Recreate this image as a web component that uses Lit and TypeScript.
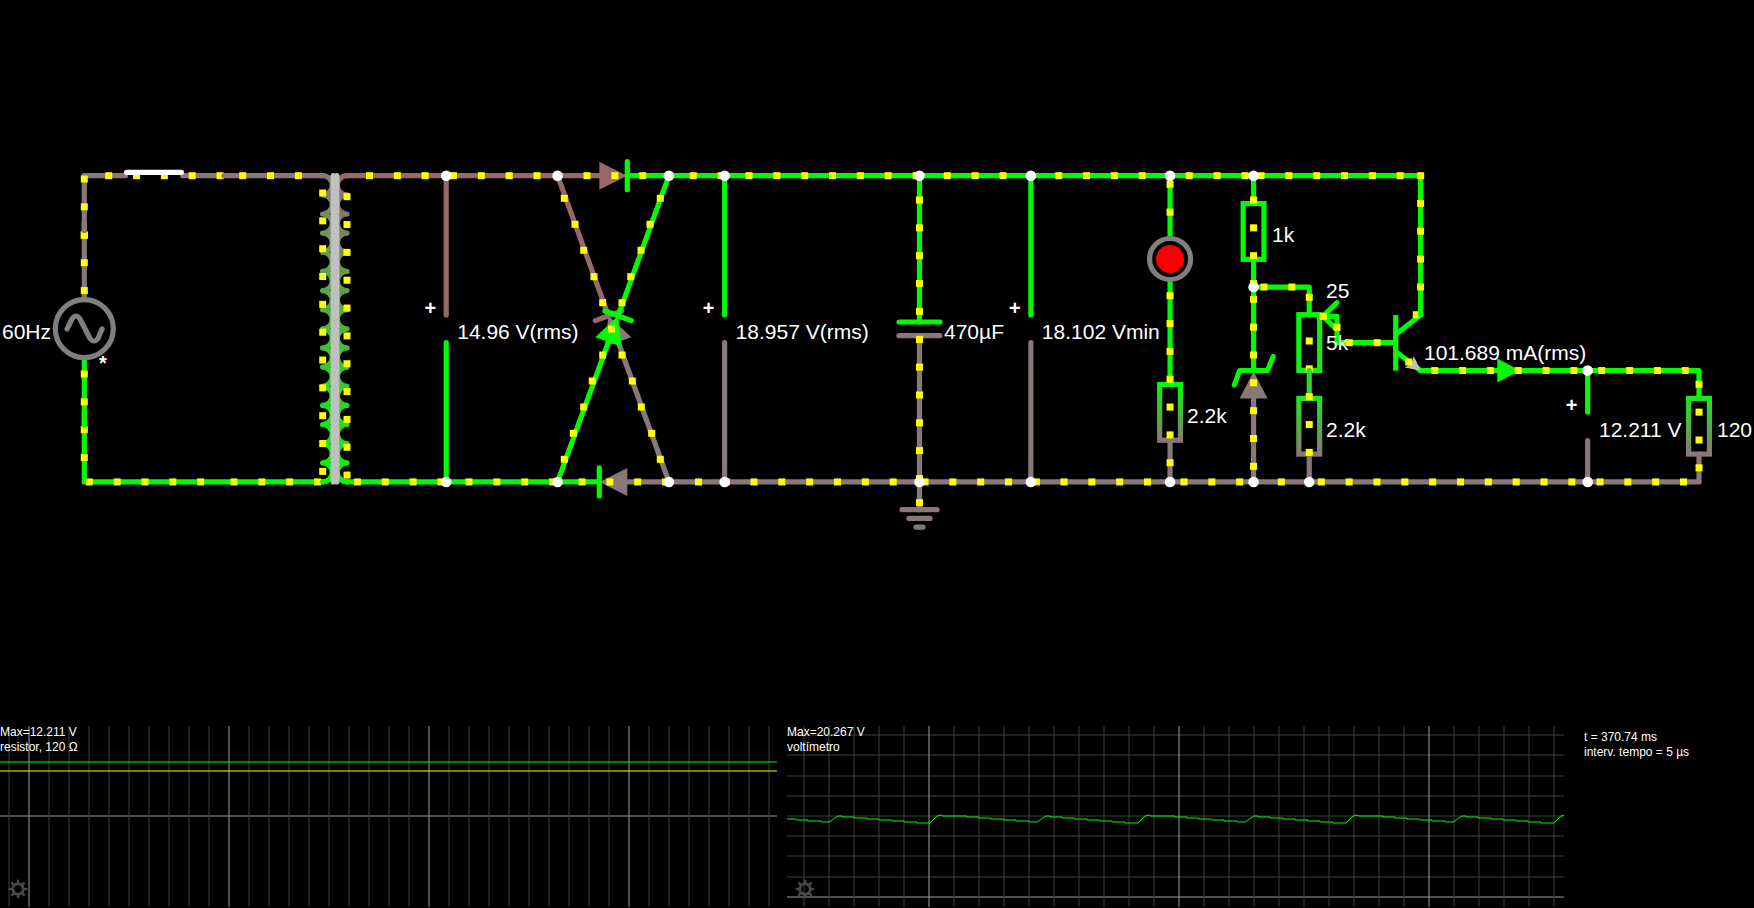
import { LitElement, html, svg, css } from "lit";
import { customElement, property } from "lit/decorators.js";

const GREEN = "#04fa04";
const GREY = "#887878";
const RUST = "#966868";
const DOT_STEP = 27.84;

// Grid coordinates of the schematic mapped to canvas units.
const X = (n: number) => 84.3 + n * DOT_STEP;
const Y = (n: number) => 175.7 + n * DOT_STEP;
const TOP = Y(0);
const BOTTOM = Y(11);

type Point = [number, number];

const wire = (color: string, ...pts: Point[]) =>
  svg`<polyline class="wire" stroke=${color} points=${pts.map((p) => p.join(",")).join(" ")} />`;

const shape = (color: string, ...pts: Point[]) =>
  svg`<polygon fill=${color} points=${pts.map((p) => p.join(",")).join(" ")} />`;

const dot = (x: number, y: number) =>
  svg`<rect class="charge" x=${x - 3.5} y=${y - 3.5} width="7" height="7" />`;

const hDots = (y: number, runs: Point[]) =>
  runs.map(([start, count]) =>
    Array.from({ length: count }, (_, i) => dot(start + i * DOT_STEP, y)));

const vDots = (x: number, runs: Point[]) =>
  runs.map(([start, count]) =>
    Array.from({ length: count }, (_, i) => dot(x, start + i * DOT_STEP)));

const node = (x: number, y: number) => svg`<circle class="node" cx=${x} cy=${y} r="5.3" />`;

const label = (x: number, y: number, text: string) =>
  svg`<text class="label" x=${x} y=${y}>${text}</text>`;

const mark = (x: number, y: number, text: string) =>
  svg`<text class="label mark" x=${x} y=${y}>${text}</text>`;

const resistor = (x: number, top: number, paint: string) =>
  svg`<rect class="body" x=${x - 10.4} y=${top} width="20.8" height="55.7" stroke=${paint} />`;

const voltmeter = (x: number, high: string, low: string, text: string) => svg`
  ${wire(high, [x, TOP], [x, 315])}
  ${wire(low, [x, 342.7], [x, BOTTOM])}
  ${mark(x - 16, 315, "+")}
  ${label(x + 11, 339, text)}`;

const coil = (x: number, sweep: number, paint: string) => {
  const step = (BOTTOM - TOP) / 16;
  const arcs = Array.from({ length: 16 }, (_, i) =>
    `A${step / 2} ${step / 2} 0 0 ${sweep} ${x} ${TOP + (i + 1) * step}`).join("");
  return svg`<path class="wire" stroke=${paint} d=${`M${x} ${TOP}${arcs}`} />`;
};

@customElement("circuit-board")
export class CircuitBoard extends LitElement {
  static styles = css`
    :host { display: block; }
    .board { display: block; width: 100%; height: auto; font-family: "Liberation Sans", Arial, sans-serif; }
    .wire { fill: none; stroke-width: 5.2; stroke-linecap: round; stroke-linejoin: round; }
    .body { fill: none; stroke-width: 5.2; }
    .butt { stroke-linecap: butt; }
    .charge { fill: #ffff00; }
    .node { fill: #ffffff; }
    .ring { fill: #000000; stroke: #808080; stroke-width: 5.2; }
    .lamp { fill: #fa0000; }
    .label { fill: #ffffff; font-size: 21px; }
    .mark { font-weight: 700; font-size: 20px; text-anchor: middle; }
  `;

  private primary() {
    return svg`
      ${wire(GREY, [X(0), TOP], [125.5, TOP])}
      ${wire(GREY, [182.7, TOP], [224, TOP])}
      ${wire(GREY, [X(0), TOP], [X(0), 234])}
      ${hDots(TOP, [[108.7, 5]])}
      ${vDots(X(0), [[179, 3]])}
      ${wire("#ffffff", [126.6, 172.3], [181.4, 172.3])}
      ${wire(GREY, [224, TOP], [322.6, TOP])}
      ${hDots(TOP, [[242.7, 3]])}
      ${wire(GREY, [X(0), 231], [X(0), 300])}
      ${vDots(X(0), [[262.7, 2]])}
      ${dot(X(0), 235.5)}
      ${wire(GREY, [X(0), 222], [X(0), 230.5])}
      ${wire(GREEN, [X(0), 358], [X(0), BOTTOM], [322.6, BOTTOM])}
      ${vDots(X(0), [[374, 4]])}
      ${wire(GREEN, [X(0), 412], [X(0), 425])}
      ${hDots(BOTTOM, [[89.3, 5], [234, 4]])}
      <circle class="ring" cx=${X(0)} cy="328.7" r="29" />
      <path class="wire" stroke="#808080"
        d="M67 329L72 319Q74 316 76 316Q78 316 80 319L90 338.5Q92 341 94 341Q96 341 98 338.5L102 329" />
      ${label(2, 339, "60Hz")}
      ${mark(103, 370, "*")}`;
  }

  private transformer() {
    return svg`
      ${coil(322.6, 1, "url(#primary)")}
      ${coil(347, 0, "url(#secondary)")}
      ${wire("#c0c0c0", [333.2, TOP], [333.2, BOTTOM])}
      ${wire("#c0c0c0", [336.8, TOP], [336.8, BOTTOM])}
      ${vDots(322.7, [[193, 11]])}
      ${vDots(347, [[196.7, 11]])}`;
  }

  private rails() {
    return svg`
      ${wire(RUST, [347, TOP], [602, TOP])}
      ${wire(GREEN, [627.3, TOP], [X(48), TOP], [X(48), 315])}
      ${wire(GREEN, [347, BOTTOM], [599.3, BOTTOM])}
      ${wire(GREY, [627.3, BOTTOM], [X(58), BOTTOM], [X(58), 454])}
      ${shape(RUST, [599.3, TOP - 14], [599.3, TOP + 14], [627, TOP])}
      ${wire(GREEN, [627.3, TOP - 14], [627.3, TOP + 14])}
      ${shape(GREY, [627.3, BOTTOM - 14], [627.3, BOTTOM + 14], [599.6, BOTTOM])}
      ${wire(GREEN, [599.3, BOTTOM - 14], [599.3, BOTTOM + 14])}
      ${hDots(TOP, [[369.5, 3], [453.5, 4], [587, 3], [693.3, 2], [749, 7], [947.3, 3],
        [1058.7, 4], [1189.3, 3], [1261, 6], [1420.7, 1]])}
      ${hDots(BOTTOM, [[357.4, 4], [469, 4], [582, 4], [698.5, 2], [754, 6], [925, 5],
        [1064, 4], [1184, 3], [1281.3, 1], [1321.3, 10], [1600, 4]])}
      ${vDots(X(48), [[203.4, 4]])}`;
  }

  private bridge() {
    const left: Point[] = [[564.3, 198.3], [575, 224.3], [583.7, 250.3], [594, 276.7], [602.7, 302.7],
      [622, 355], [632.3, 381], [641.3, 407], [651.7, 433.3], [660.3, 459.3]];
    const right: Point[] = [[660.3, 198.3], [650, 224.3], [641, 250.3], [630.7, 276.7], [622, 302.7],
      [602.7, 355], [592.3, 381], [583.7, 407], [573.3, 433.3], [564.3, 459.3]];
    return svg`
      ${wire(RUST, [X(17), TOP], [608.5, 315.8])}
      ${wire(GREY, [X(21), BOTTOM], [618.1, 342])}
      ${shape(GREY, [604.9, 346.8], [631.3, 337.2], [608.5, 315.8])}
      ${wire(RUST, [595.3, 320.6], [621.7, 311])}
      ${left.map(([x, y]) => dot(x, y))}
      ${wire(GREEN, [X(21), TOP], [618.1, 315.8])}
      ${wire(GREEN, [X(17), BOTTOM], [608.5, 342])}
      ${shape(GREEN, [595.3, 337.2], [621.7, 346.8], [618.1, 315.8])}
      ${wire(GREEN, [604.9, 311], [631.3, 320.6])}
      ${right.map(([x, y]) => dot(x, y))}
      ${dot(611.5, 329)}`;
  }

  private filter() {
    const x = X(30);
    return svg`
      ${wire(GREEN, [x, TOP], [x, 322])}
      ${wire(GREY, [x, 335.7], [x, 509.7])}
      ${vDots(x, [[200, 5], [339.3, 6], [502.7, 1]])}
      ${wire(GREEN, [x - 20.5, 322], [x + 20.5, 322])}
      ${wire(GREY, [x - 20.5, 335.7], [x + 20.5, 335.7])}
      ${dot(x, 339.3)}
      ${wire(GREY, [x - 17.5, 509.7], [x + 17.5, 509.7])}
      ${wire(GREY, [x - 10.5, 518.4], [x + 10.5, 518.4])}
      ${wire(GREY, [x - 3.5, 527.1], [x + 3.5, 527.1])}
      ${label(944, 339, "470µF")}`;
  }

  private lamp() {
    const x = X(39);
    return svg`
      ${wire(GREEN, [x, TOP], [x, 384])}
      ${wire(GREY, [x, 442], [x, BOTTOM])}
      <circle class="ring" cx=${x} cy="259" r="20.5" />
      <circle class="lamp" cx=${x} cy="259" r="14" />
      ${resistor(x, 384.5, "url(#drop-led)")}
      ${vDots(x, [[184.3, 2], [295.7, 7]])}
      ${label(1187, 423, "2.2k")}`;
  }

  private reference() {
    const z = X(42);
    const p = X(44);
    return svg`
      ${wire(GREEN, [z, TOP], [z, 203])}
      ${wire(GREEN, [z, 260], [z, 370.5])}
      ${wire(GREY, [z, 396], [z, BOTTOM])}
      ${resistor(z, 203.6, GREEN)}
      ${wire(GREEN, [z, Y(4)], [p, Y(4)], [p, 314.9])}
      ${wire(GREEN, [1234.4, 385], [z - 14, 370.5], [z + 14, 370.5], [1273.2, 356.5])}
      ${shape(GREY, [z - 14, 398.4], [z + 14, 398.4], [z, 371.5])}
      ${vDots(z, [[200, 4], [299.3, 7]])}
      ${hDots(Y(4), [[1264, 2]])}
      ${resistor(p, 314.7, "url(#drop-pot)")}
      ${vDots(p, [[297.3, 1], [341, 2]])}
      ${wire("#2cd62c", [p, 370.5], [p, 398.4])}
      ${resistor(p, 398.4, "url(#drop-low)")}
      ${wire(GREY, [p, 456], [p, BOTTOM])}
      ${vDots(p, [[396.7, 3]])}
      ${wire(GREEN, [1323, 316.3], [1337, 316.3], [1337, 342.7], [1395, 342.7])}
      ${wire(GREEN, [1337, 302.7], [1323, 316.3], [1337, 329.5])}
      ${label(1272, 242, "1k")}
      ${label(1326, 298, "25")}
      ${label(1326, 350, "5k")}
      ${label(1326, 437, "2.2k")}
      ${dot(1323.3, 316.3)}
      ${dot(1337, 327.3)}
      ${hDots(342.7, [[1349.3, 2]])}`;
  }

  private output() {
    const v = X(54);
    const y = Y(7);
    return svg`
      ${wire(GREEN, [1397, 333.5], [X(48), 315])}
      ${wire(GREEN, [1397, 352.5], [X(48), y])}
      <line class="wire butt" stroke=${GREEN} x1="1395.7" y1="315" x2="1395.7" y2="370.7" />
      ${wire(GREEN, [X(48), y], [X(58), y], [X(58), 398])}
      ${shape("#c0c0c0", [X(48), y], [1413.7, 356], [1411.5, 363.5], [1404.7, 367.5])}
      ${dot(1416.3, 314.7)}
      ${wire(GREEN, [X(48), 306], [X(48), 315])}
      ${dot(1408.7, 362)}
      ${shape(GREEN, [1497.3, y - 12], [1497.3, y + 12], [1520, y])}
      ${hDots(y, [[1434.7, 10]])}
      ${wire(GREEN, [v, y], [v, 412])}
      ${wire(GREY, [v, 440.5], [v, BOTTOM])}
      ${resistor(X(58), 398.4, "url(#drop-low)")}
      ${vDots(X(58), [[384.3, 4]])}
      ${label(1424, 360, "101.689 mA(rms)")}
      ${mark(v - 16, 412, "+")}
      ${label(1599, 437, "12.211 V")}
      ${label(1717, 437, "120")}`;
  }

  render() {
    const topNodes = [13, 17, 21, 23, 30, 34, 39, 42];
    const bottomNodes = [...topNodes, 44, 54];
    return html`
      <svg class="board" viewBox="0 0 1754 726" role="img" aria-label="Circuito">
        <defs>
          <linearGradient id="primary" gradientUnits="userSpaceOnUse" x1="0" y1=${TOP} x2="0" y2=${BOTTOM}>
            <stop offset="0" stop-color=${GREY} /><stop offset="1" stop-color=${GREEN} />
          </linearGradient>
          <linearGradient id="secondary" gradientUnits="userSpaceOnUse" x1="0" y1=${TOP} x2="0" y2=${BOTTOM}>
            <stop offset="0" stop-color=${RUST} /><stop offset="1" stop-color=${GREEN} />
          </linearGradient>
          <linearGradient id="drop-led" x1="0" y1="0" x2="0" y2="1">
            <stop offset="0" stop-color=${GREEN} /><stop offset="1" stop-color=${GREY} />
          </linearGradient>
          <linearGradient id="drop-pot" x1="0" y1="0" x2="0" y2="1">
            <stop offset="0" stop-color=${GREEN} /><stop offset="1" stop-color="#1ee81e" />
          </linearGradient>
          <linearGradient id="drop-low" x1="0" y1="0" x2="0" y2="1">
            <stop offset="0" stop-color="#1ee61e" /><stop offset="1" stop-color=${GREY} />
          </linearGradient>
        </defs>
        ${this.primary()}
        ${this.rails()}
        ${this.transformer()}
        ${voltmeter(X(13), RUST, GREEN, "14.96 V(rms)")}
        ${this.bridge()}
        ${voltmeter(X(23), GREEN, GREY, "18.957 V(rms)")}
        ${this.filter()}
        ${voltmeter(X(34), GREEN, GREY, "18.102 Vmin")}
        ${this.lamp()}
        ${this.reference()}
        ${this.output()}
        ${topNodes.map((n) => node(X(n), TOP))}
        ${bottomNodes.map((n) => node(X(n), BOTTOM))}
        ${node(X(42), Y(4))}
        ${node(X(54), Y(7))}
      </svg>`;
  }
}

interface Trace { color: string; points: Point[]; }

@customElement("scope-view")
export class ScopeView extends LitElement {
  static styles = css`
    :host { display: block; position: relative; min-width: 0; }
    .plot { display: block; width: 100%; height: 181px; font-family: "Liberation Sans", Arial, sans-serif; }
    .minor { stroke: #404040; }
    .major { stroke: #a0a0a0; }
    .trace { fill: none; stroke-width: 1; }
    .caption { fill: #ffffff; font-size: 12px; }
    .gear { position: absolute; left: 8px; top: 153px; width: 20px; height: 20px; padding: 0; border: 0; background: none; cursor: pointer; }
    .icon { display: block; fill: none; stroke: #484848; stroke-linecap: round; }
  `;

  @property({ attribute: false }) lines: string[] = [];
  @property({ attribute: false }) traces: Trace[] = [];
  @property({ attribute: false }) rows: number[] = [];
  @property({ type: Number }) majorRow = 0;
  @property({ type: Number }) start = 0;
  @property({ type: Number }) step = 20;
  @property({ type: Number }) majorOffset = 0;

  render() {
    const columns = Array.from({ length: 120 }, (_, i) => i);
    return html`
      <svg class="plot" role="img" aria-label=${this.lines.join(" ")}>
        ${this.rows.map((y) => svg`
          <line class=${y === this.majorRow ? "major" : "minor"} x1="0" x2="100%" y1=${y} y2=${y} />`)}
        ${columns.map((i) => {
          const x = this.start + i * this.step;
          return svg`<line class=${i % 10 === this.majorOffset ? "major" : "minor"}
            x1=${x} x2=${x} y1="0" y2="181" />`;
        })}
        ${this.traces.map((t) => svg`
          <polyline class="trace" stroke=${t.color} points=${t.points.map((p) => p.join(",")).join(" ")} />`)}
        ${this.lines.map((text, i) => svg`<text class="caption" x="0" y=${10 + i * 15}>${text}</text>`)}
      </svg>
      <button class="gear" type="button" aria-label="Propriedades">
        <svg class="icon" width="20" height="20" viewBox="-10 -10 20 20">
          <circle r="5.2" stroke-width="2.8" />
          <path stroke-width="2.6" d="M0-8.2V-6M0 8.2V6M-8.2 0H-6M8.2 0H6M-5.9-5.9L-4.4-4.4M5.9-5.9L4.4-4.4M-5.9 5.9L-4.4 4.4M5.9 5.9L4.4 4.4" />
        </svg>
      </button>`;
  }
}

const TRACE_GREEN = "#00ff00";
const TRACE_YELLOW = "#ffff00";

const flat = (color: string, y: number): Trace => ({ color, points: [[0, y], [4000, y]] });

// One full ripple period (two rectified half cycles): the level holds until the next x.
const RIPPLE: Point[] = [
  [51, 90], [55, 90], [55, 91], [67, 91], [67, 92], [80, 92], [80, 93], [92, 93], [92, 94],
  [105, 94], [105, 95], [117, 95], [117, 96], [130, 96], [130, 97], [143, 97], [150, 90],
  [154, 89], [156, 90], [180, 90], [180, 91], [192, 91], [192, 92], [204, 92], [204, 93],
  [217, 93], [217, 94], [229, 94], [229, 95], [242, 95], [242, 96], [250, 96],
];

const ripple: Trace = {
  color: TRACE_GREEN,
  points: Array.from({ length: 12 }, (_, k) => k - 1)
    .flatMap((k) => RIPPLE.map(([x, y]): Point => [x + k * 208, y])),
};

@customElement("app-root")
export class AppRoot extends LitElement {
  static styles = css`
    :host { display: flex; flex-direction: column; min-height: 100vh; overflow: hidden; background: #000000; color: #ffffff; font-family: "Liberation Sans", Arial, sans-serif; }
    .scopes { display: grid; grid-template-columns: minmax(0, 1fr) minmax(0, 1fr) 180px; column-gap: 10px; }
    .info { margin: 0; padding: 4px 0 0 10px; font-size: 12px; line-height: 15px; }
    .line { display: block; }
  `;

  private flatTraces = [flat(TRACE_YELLOW, 45), flat(TRACE_GREEN, 36)];

  render() {
    return html`
      <circuit-board></circuit-board>
      <div class="scopes">
        <scope-view .lines=${["Max=12.211 V", "resistor, 120 Ω"]} .traces=${this.flatTraces}
          .rows=${[90]} .majorRow=${90} .start=${9} .step=${20} .majorOffset=${1}></scope-view>
        <scope-view .lines=${["Max=20.267 V", "voltímetro"]} .traces=${[ripple]}
          .rows=${[9, 29, 50, 70, 90, 110, 130, 151, 171]} .majorRow=${171}
          .start=${17} .step=${25} .majorOffset=${5}></scope-view>
        <p class="info">
          <span class="line">t = 370.74 ms</span>
          <span class="line">interv. tempo = 5 µs</span>
        </p>
      </div>`;
  }
}
